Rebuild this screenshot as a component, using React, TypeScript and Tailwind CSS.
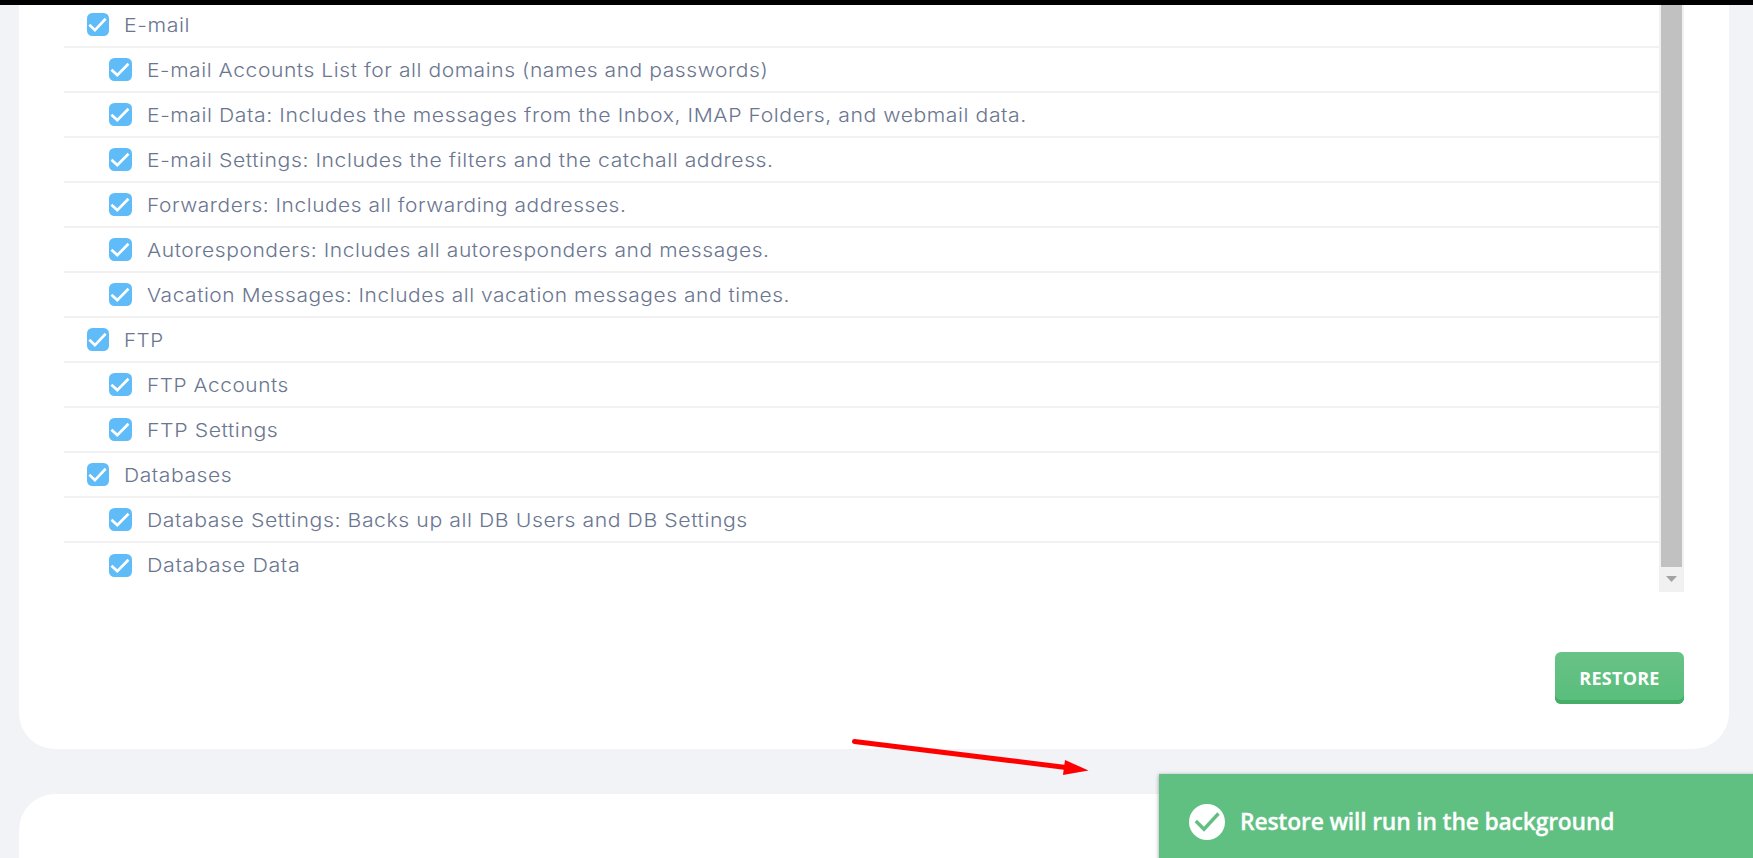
import React from "react";

type Item = { label: string; child?: boolean; stretch: string };

const items: Item[] = [
  { label: "E-mail", stretch: "scale-x-[1.124]" },
  { label: "E-mail Accounts List for all domains (names and passwords)", child: true, stretch: "scale-x-[1.108]" },
  { label: "E-mail Data: Includes the messages from the Inbox, IMAP Folders, and webmail data.", child: true, stretch: "scale-x-[1.115]" },
  { label: "E-mail Settings: Includes the filters and the catchall address.", child: true, stretch: "scale-x-[1.1145]" },
  { label: "Forwarders: Includes all forwarding addresses.", child: true, stretch: "scale-x-[1.1]" },
  { label: "Autoresponders: Includes all autoresponders and messages.", child: true, stretch: "scale-x-[1.1066]" },
  { label: "Vacation Messages: Includes all vacation messages and times.", child: true, stretch: "scale-x-[1.1017]" },
  { label: "FTP", stretch: "scale-x-[1.08]" },
  { label: "FTP Accounts", child: true, stretch: "scale-x-[1.096]" },
  { label: "FTP Settings", child: true, stretch: "scale-x-[1.12]" },
  { label: "Databases", stretch: "scale-x-[1.109]" },
  { label: "Database Settings: Backs up all DB Users and DB Settings", child: true, stretch: "scale-x-[1.117]" },
  { label: "Database Data", child: true, stretch: "scale-x-[1.133]" },
];

function Check({ narrow }: { narrow: boolean }) {
  return (
    <svg
      className={`h-[23px] shrink-0 ${narrow ? "w-[22px]" : "w-[23px]"}`}
      viewBox="0 0 23 23"
      preserveAspectRatio="none"
    >
      <rect width="23" height="23" rx="5.5" fill="#5fbcf8" />
      <path d="M2.4 11.7 L8.3 17.1 L19.5 5.8" fill="none" stroke="#fff" strokeWidth="2.7" />
    </svg>
  );
}

function Row({ item, first, last }: { item: Item; first: boolean; last: boolean }) {
  return (
    <li
      className={`flex items-start ${item.child ? "pl-[45px]" : "pl-[23px]"} ${
        first ? "h-[43px] pt-2" : last ? "h-[49px] pt-[11px]" : "h-[45px] pt-[10px]"
      } ${last ? "" : "border-b-2 border-[#f1f1f1]"}`}
    >
      <Check narrow={!item.child} />
      <span
        className={`ml-[14.5px] origin-left whitespace-nowrap text-[19px] font-light tracking-[0.5px] text-[#6b7690] ${
          last ? "leading-[23px]" : "leading-[25px]"
        } ${item.stretch}`}
      >
        {item.label}
      </span>
    </li>
  );
}

export default function App() {
  return (
    <div className="relative flex h-[858px] w-[1753px] flex-col overflow-hidden bg-[#f1f3f7] font-['Inter','Noto_Sans',sans-serif]">
      <div className="h-[5px] shrink-0 bg-black" />
      <section className="ml-[19px] flex h-[744px] w-[1710px] shrink-0 flex-col rounded-b-[36px] bg-white px-[45px]">
        <div className="flex h-[587px]">
          <ul className="flex-1">
            {items.map((item, i) => (
              <Row key={item.label} item={item} first={i === 0} last={i === items.length - 1} />
            ))}
          </ul>
          <div className="flex w-[25px] flex-col items-center bg-[#f1f1f1]">
            <div className="h-[562px] w-[21px] bg-[#c1c1c1]" />
            <svg className="mt-[9px] h-[6px] w-[11px]" viewBox="0 0 11 6">
              <path d="M0 0H11L5.5 6Z" fill="#a3a3a3" />
            </svg>
          </div>
        </div>
        <button className="mt-[60px] h-[52px] w-[129px] self-end rounded-[6px] bg-linear-to-b from-[#68c386] to-[#58bd7b] font-['Open_Sans',sans-serif] text-[18px] font-bold tracking-[0.25px] text-white shadow-[inset_0_-4px_0_#45ad68]">
          RESTORE
        </button>
      </section>
      <section className="mt-[45px] ml-[19px] h-[100px] w-[1710px] shrink-0 rounded-t-[36px] bg-white" />

      <svg className="absolute top-[730px] left-[845px] h-[50px] w-[250px]" viewBox="845 730 250 50">
        <path d="M854.5 741.5 L1066 767.5" stroke="#f00" strokeWidth="5" strokeLinecap="round" />
        <path d="M1065 760 L1088.5 770.5 L1063 775Z" fill="#f00" />
      </svg>

      <div className="absolute top-[774px] left-[1159px] flex h-[100px] w-[600px] items-start bg-[#60c082] pt-[30px] pl-[30px] shadow-[0_1px_4px_rgba(0,0,0,0.4)]">
        <svg className="h-9 w-9" viewBox="0 0 36 36">
          <circle cx="18" cy="18" r="18" fill="#fff" />
          <path d="M6.8 17 L15 25.2 L29.5 9.5" fill="none" stroke="#60c082" strokeWidth="3.4" />
        </svg>
        <span className="-mt-px ml-[15px] origin-left scale-x-[0.953] whitespace-nowrap font-['Open_Sans',sans-serif] text-[24px] leading-9 font-semibold tracking-[-0.2px] text-white [-webkit-text-stroke:0.3px_white]">
          Restore will run in the background
        </span>
      </div>
    </div>
  );
}
